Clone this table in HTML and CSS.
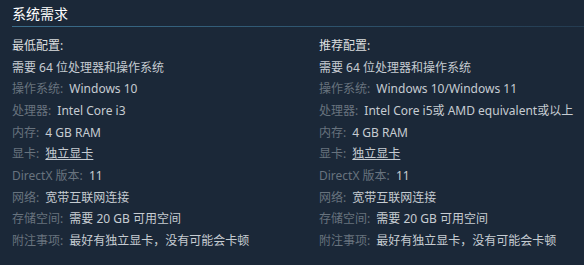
FILE: index.html
```html
<!DOCTYPE html>
<html lang="zh">
<head>
<meta charset="utf-8">
<link rel="stylesheet" href="styles.css">
</head>
<body>
<div class="sysreq">
  <h2 class="title">系统需求</h2>
  <div class="cols">
    <ul class="col">
      <li class="head">最低配置:</li>
      <li>需要 64 位处理器和操作系统</li>
      <li><span class="lbl">操作系统:</span> Windows 10</li>
      <li><span class="lbl">处理器:</span> Intel Core i3</li>
      <li><span class="lbl">内存:</span> 4 GB RAM</li>
      <li><span class="lbl">显卡:</span> <a class="link">独立显卡</a></li>
      <li><span class="lbl">DirectX 版本:</span> 11</li>
      <li><span class="lbl">网络:</span> 宽带互联网连接</li>
      <li><span class="lbl">存储空间:</span> 需要 20 GB 可用空间</li>
      <li><span class="lbl">附注事项:</span> 最好有独立显卡，没有可能会卡顿</li>
    </ul>
    <ul class="col">
      <li class="head">推荐配置:</li>
      <li>需要 64 位处理器和操作系统</li>
      <li><span class="lbl">操作系统:</span> Windows 10/Windows 11</li>
      <li><span class="lbl">处理器:</span> Intel Core i5或 AMD equivalent或以上</li>
      <li><span class="lbl">内存:</span> 4 GB RAM</li>
      <li><span class="lbl">显卡:</span> <a class="link">独立显卡</a></li>
      <li><span class="lbl">DirectX 版本:</span> 11</li>
      <li><span class="lbl">网络:</span> 宽带互联网连接</li>
      <li><span class="lbl">存储空间:</span> 需要 20 GB 可用空间</li>
      <li><span class="lbl">附注事项:</span> 最好有独立显卡，没有可能会卡顿</li>
    </ul>
  </div>
</div>
</body>
</html>
```
FILE: styles.css
```css
html, body {
  margin: 0;
  padding: 0;
  background: #1b2838;
  width: 584px;
  height: 265px;
  overflow: hidden;
}
.sysreq {
  padding: 0 0 0 12px;
  font-family: "Noto Sans", "Noto Sans CJK SC", sans-serif;
  font-size: 12px;
  color: #c6ccd2;
}
.title {
  margin: 0;
  font-size: 14px;
  font-weight: normal;
  color: #ffffff;
  line-height: 18px;
  padding-top: 5px;
  padding-bottom: 3px;
  border-bottom: 1px solid transparent;
  border-image: linear-gradient(to right, #3b6e8c 0%, #2f5670 50%, #243b50 100%) 1;
}
.cols {
  display: grid;
  grid-template-columns: 307px 1fr;
  padding-top: 8px;
}
.col {
  list-style: none;
  margin: 0;
  padding: 0;
}
.col li {
  line-height: 21.67px;
  white-space: nowrap;
}
.head {
  color: #dcdedf;
}
.lbl {
  color: #68737e;
  margin-right: 3px;
}
.link {
  color: #c6ccd2;
  text-decoration: underline;
}
```
